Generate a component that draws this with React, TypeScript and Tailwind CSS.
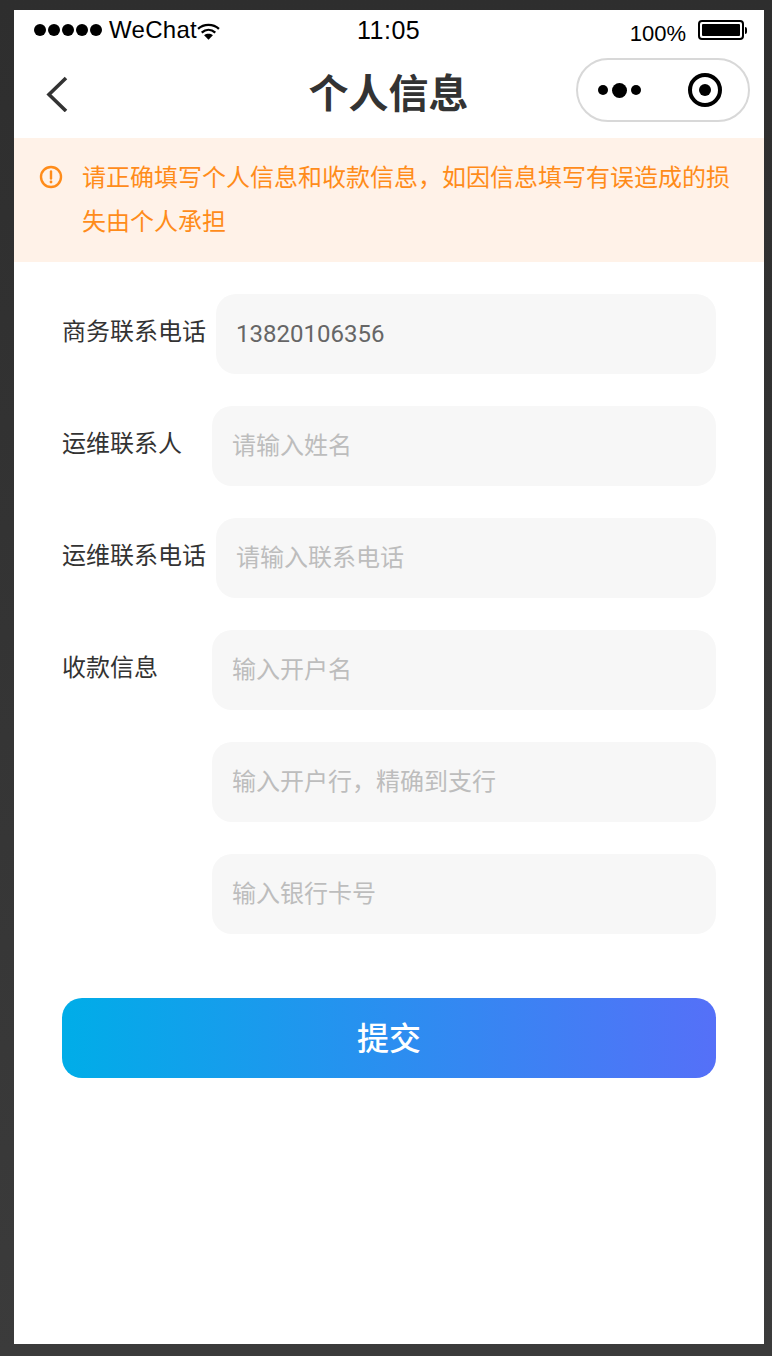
const cjk = "font-['Roboto','Noto_Sans_CJK_SC',sans-serif]";

const StatusBar = () => (
  <div className="relative flex h-10 items-center justify-between pl-5 pr-[17px] font-['Liberation_Sans',sans-serif] text-black">
    <div className="flex items-center">
      <div className="flex gap-[2px]">
        {[0, 1, 2, 3, 4].map(i => (
          <span key={i} className="h-3 w-3 rounded-full bg-black" />
        ))}
      </div>
      <span className="ml-[7px] text-[24px] leading-none tracking-[0.3px]">WeChat</span>
      <svg width="23" height="17" viewBox="0 0 22 16" className="mt-[3px]" fill="none" stroke="black" strokeWidth="2.2">
        <path d="M1 5.5C6.5 0.5 15.5 0.5 21 5.5" />
        <path d="M4.5 9C8.5 5.5 13.5 5.5 17.5 9" />
        <path d="M11 16 L6.8 11.6 C9.2 9.8 12.8 9.8 15.2 11.6 Z" fill="black" stroke="none" />
      </svg>
    </div>
    <span className="absolute left-[343px] top-[-1px] text-[25px] leading-[42px] tracking-[0.5px]">11:05</span>
    <div className="flex items-center">
      <span className="mt-2 text-[22px] leading-none">100%</span>
      <div className="ml-3 h-[20px] w-[46px] rounded-[4px] border-2 border-black p-[2px]">
        <div className="h-full w-full rounded-[1px] bg-black" />
      </div>
      <span className="ml-[1px] h-[7px] w-[2px] rounded-r-full bg-black" />
    </div>
  </div>
);

const NavBar = () => (
  <div className="relative flex h-[88px] items-center justify-center">
    <svg width="24" height="36" viewBox="0 0 24 36" className="absolute left-[30px] top-[26px]" fill="none" stroke="#333" strokeWidth="3.6">
      <path d="M22 2 L5 18.5 L22 35" />
    </svg>
    <span className={`${cjk} mr-[1px] pt-[2px] text-[40px] font-bold leading-none text-[#333]`}>个人信息</span>
    <div className="absolute left-[562px] top-[8px] flex h-16 w-[174px] items-center rounded-full border-2 border-[#d8d8d8] bg-white">
      <div className="ml-[20px] flex items-center gap-[4px]">
        <span className="h-[10px] w-[10px] rounded-full bg-black" />
        <span className="h-[15px] w-[15px] rounded-full bg-black" />
        <span className="h-[10px] w-[10px] rounded-full bg-black" />
      </div>
      <div className="ml-[47px] flex h-[34px] w-[34px] items-center justify-center rounded-full border-[4px] border-black">
        <span className="h-[12px] w-[12px] rounded-full bg-black" />
      </div>
    </div>
  </div>
);

const Notice = () => (
  <div className="flex h-[124px] bg-[#fff2e8] pl-[26px] pr-[30px] pt-[18px] text-[#ff8c1a]">
    <svg width="24" height="24" viewBox="0 0 24 24" className="mt-[9px] -ml-[1px] shrink-0" fill="none">
      <circle cx="12" cy="12" r="10" stroke="#ff8c1a" strokeWidth="2.4" />
      <path d="M12 6.5V13.5" stroke="#ff8c1a" strokeWidth="2.4" strokeLinecap="round" />
      <circle cx="12" cy="17" r="1.4" fill="#ff8c1a" />
    </svg>
    <p className={`${cjk} ml-[19px] text-[24px] leading-[44px]`}>
      请正确填写个人信息和收款信息，如因信息填写有误造成的损失由个人承担
    </p>
  </div>
);

interface FieldProps {
  label?: string;
  placeholder?: string;
  value?: string;
  wide?: boolean;
}

const Field = ({ label, placeholder, value, wide }: FieldProps) => (
  <div className="flex h-20">
    <label className={`${cjk} ${wide ? "w-[154px]" : "w-[150px]"} shrink-0 pt-[19px] text-[24px] leading-[38px] text-[#333]`}>
      {label}
    </label>
    <input
      readOnly
      value={value}
      placeholder={placeholder}
      className={`${cjk} h-20 min-w-0 flex-1 rounded-[20px] bg-[#f7f7f7] px-5 text-[24px] text-[#666] outline-none placeholder:text-[#bdbdbd]`}
    />
  </div>
);

const App = () => (
  <div className="h-[1356px] w-[772px] bg-gradient-to-b from-[#2e2e2e] to-[#3b3b3b] pb-3 pl-[14px] pr-2 pt-[10px]">
    <div className="h-[1334px] w-[750px] bg-white">
      <StatusBar />
      <NavBar />
      <Notice />
      <form className="flex flex-col gap-8 pl-12 pr-12 pt-8">
        <Field label="商务联系电话" value="13820106356" wide />
        <Field label="运维联系人" placeholder="请输入姓名" />
        <Field label="运维联系电话" placeholder="请输入联系电话" wide />
        <Field label="收款信息" placeholder="输入开户名" />
        <Field placeholder="输入开户行，精确到支行" />
        <Field placeholder="输入银行卡号" />
        <button
          type="button"
          className={`${cjk} mt-8 h-20 rounded-[20px] bg-[linear-gradient(90deg,#00ade8,#5570f8)] pt-[2px] text-[32px] font-medium text-white`}
        >
          提交
        </button>
      </form>
    </div>
  </div>
);

export default App;
